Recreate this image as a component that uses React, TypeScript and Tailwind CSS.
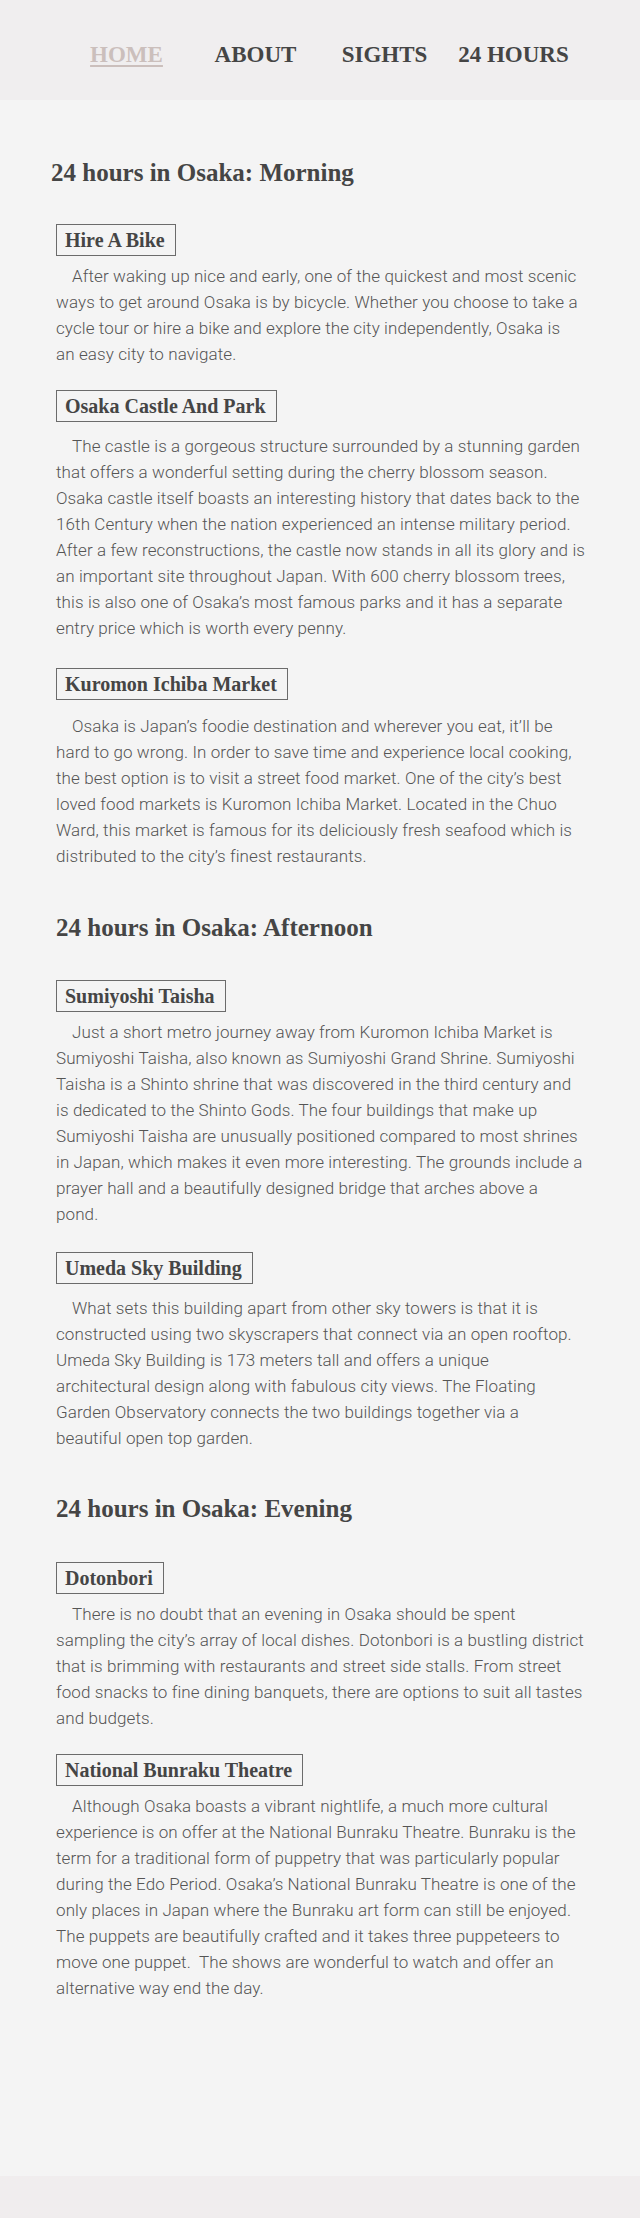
const serif = "font-['Liberation_Serif',_'DejaVu_Serif',_serif]";

type Item = { title: string; boxMt: string; pMt: string; lines: string[] };
type Section = { heading: string; headMt: string; headPl: string; items: Item[] };

const sections: Section[] = [
  {
    heading: "24 hours in Osaka: Morning",
    headMt: "mt-0",
    headPl: "pl-[51px]",
    items: [
      {
        title: "Hire A Bike",
        boxMt: "mt-[39px]",
        pMt: "mt-[7px]",
        lines: [
          "After waking up nice and early, one of the quickest and most scenic",
          "ways to get around Osaka is by bicycle. Whether you choose to take a",
          "cycle tour or hire a bike and explore the city independently, Osaka is",
          "an easy city to navigate.",
        ],
      },
      {
        title: "Osaka Castle And Park",
        boxMt: "mt-[23px]",
        pMt: "mt-[11px]",
        lines: [
          "The castle is a gorgeous structure surrounded by a stunning garden",
          "that offers a wonderful setting during the cherry blossom season.",
          "Osaka castle itself boasts an interesting history that dates back to the",
          "16th Century when the nation experienced an intense military period.",
          "After a few reconstructions, the castle now stands in all its glory and is",
          "an important site throughout Japan. With 600 cherry blossom trees,",
          "this is also one of Osaka’s most famous parks and it has a separate",
          "entry price which is worth every penny.",
        ],
      },
      {
        title: "Kuromon Ichiba Market",
        boxMt: "mt-[27px]",
        pMt: "mt-[13px]",
        lines: [
          "Osaka is Japan’s foodie destination and wherever you eat, it’ll be",
          "hard to go wrong. In order to save time and experience local cooking,",
          "the best option is to visit a street food market. One of the city’s best",
          "loved food markets is Kuromon Ichiba Market. Located in the Chuo",
          "Ward, this market is famous for its deliciously fresh seafood which is",
          "distributed to the city’s finest restaurants.",
        ],
      },
    ],
  },
  {
    heading: "24 hours in Osaka: Afternoon",
    headMt: "mt-[46px]",
    headPl: "pl-14",
    items: [
      {
        title: "Sumiyoshi Taisha",
        boxMt: "mt-10",
        pMt: "mt-[7px]",
        lines: [
          "Just a short metro journey away from Kuromon Ichiba Market is",
          "Sumiyoshi Taisha, also known as Sumiyoshi Grand Shrine. Sumiyoshi",
          "Taisha is a Shinto shrine that was discovered in the third century and",
          "is dedicated to the Shinto Gods. The four buildings that make up",
          "Sumiyoshi Taisha are unusually positioned compared to most shrines",
          "in Japan, which makes it even more interesting. The grounds include a",
          "prayer hall and a beautifully designed bridge that arches above a",
          "pond.",
        ],
      },
      {
        title: "Umeda Sky Building",
        boxMt: "mt-[25px]",
        pMt: "mt-[11px]",
        lines: [
          "What sets this building apart from other sky towers is that it is",
          "constructed using two skyscrapers that connect via an open rooftop.",
          "Umeda Sky Building is 173 meters tall and offers a unique",
          "architectural design along with fabulous city views. The Floating",
          "Garden Observatory connects the two buildings together via a",
          "beautiful open top garden.",
        ],
      },
    ],
  },
  {
    heading: "24 hours in Osaka: Evening",
    headMt: "mt-[45px]",
    headPl: "pl-14",
    items: [
      {
        title: "Dotonbori",
        boxMt: "mt-[41px]",
        pMt: "mt-[7px]",
        lines: [
          "There is no doubt that an evening in Osaka should be spent",
          "sampling the city’s array of local dishes. Dotonbori is a bustling district",
          "that is brimming with restaurants and street side stalls. From street",
          "food snacks to fine dining banquets, there are options to suit all tastes",
          "and budgets.",
        ],
      },
      {
        title: "National Bunraku Theatre",
        boxMt: "mt-[23px]",
        pMt: "mt-[7px]",
        lines: [
          "Although Osaka boasts a vibrant nightlife, a much more cultural",
          "experience is on offer at the National Bunraku Theatre. Bunraku is the",
          "term for a traditional form of puppetry that was particularly popular",
          "during the Edo Period. Osaka’s National Bunraku Theatre is one of the",
          "only places in Japan where the Bunraku art form can still be enjoyed.",
          "The puppets are beautifully crafted and it takes three puppeteers to",
          "move one puppet.  The shows are wonderful to watch and offer an",
          "alternative way end the day.",
        ],
      },
    ],
  },
];

const links = ["HOME", "ABOUT", "SIGHTS", "24 HOURS"];

export default function App() {
  return (
    <div className="min-h-[2218px] flex flex-col bg-[#f4f4f4] text-[#454545]">
      <nav className="h-[100px] pt-2 bg-[#f0eeef] flex items-center justify-center">
        {links.map((l, i) => (
          <a
            key={l}
            href="#"
            className={`w-[129px] text-center text-[23px] leading-none font-bold ${serif} ${
              i === 0 ? "text-[#cbbfbc] underline decoration-2 underline-offset-[3px]" : "text-[#454545]"
            }`}
          >
            {l}
          </a>
        ))}
      </nav>

      <main className="flex-1 pt-[60px] pb-[175px]">
        {sections.map((s) => (
          <section key={s.heading}>
            <h2 className={`${s.headMt} ${s.headPl} text-[25px] leading-none font-bold ${serif}`}>{s.heading}</h2>
            {s.items.map((it) => (
              <article key={it.title} className="px-14">
                <h3
                  className={`${it.boxMt} inline-block border border-[#6b6b6b] pl-2 pr-2.5 text-[20px] leading-[30px] font-bold ${serif}`}
                >
                  {it.title}
                </h3>
                <p
                  className={`${it.pMt} indent-4 text-[17px] leading-[26px] tracking-[0.1px] font-light text-[#555] whitespace-pre font-['Roboto',_'Liberation_Sans',_sans-serif]`}
                >
                  {it.lines.map((ln, j) => (
                    <span key={j}>
                      {ln}
                      {j < it.lines.length - 1 && <br />}
                    </span>
                  ))}
                </p>
              </article>
            ))}
          </section>
        ))}
      </main>

      <footer className="h-[42px] bg-[#f0edee]" />
    </div>
  );
}
